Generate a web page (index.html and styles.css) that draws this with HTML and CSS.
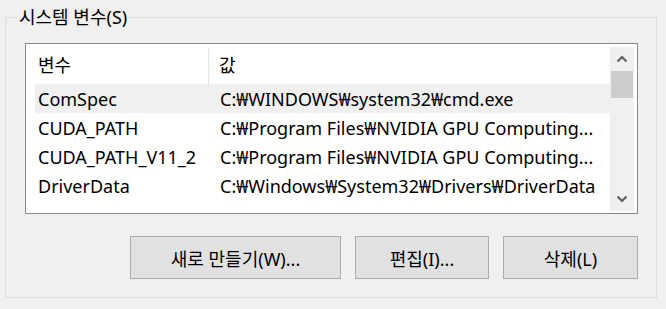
FILE: index.html
```html
<!DOCTYPE html>
<html lang="ko">
<head>
<meta charset="utf-8">
<link rel="stylesheet" href="styles.css">
</head>
<body>
<div class="page">
  <fieldset class="group">
    <legend class="title">시스템 변수(S)</legend>
    <div class="list">
      <div class="view">
        <div class="hdr">
          <div class="hc h1">변수</div>
          <div class="hc h2">값</div>
        </div>
        <div class="row sel"><div class="c1">ComSpec</div><div class="c2">C:₩WINDOWS₩system32₩cmd.exe</div></div>
        <div class="row"><div class="c1">CUDA_PATH</div><div class="c2">C:₩Program Files₩NVIDIA GPU Computing...</div></div>
        <div class="row"><div class="c1">CUDA_PATH_V11_2</div><div class="c2">C:₩Program Files₩NVIDIA GPU Computing...</div></div>
        <div class="row"><div class="c1">DriverData</div><div class="c2">C:₩Windows₩System32₩Drivers₩DriverData</div></div>
      </div>
      <div class="sbar">
        <div class="arrow">
          <svg width="12" height="8" viewBox="0 0 12 8"><path d="M1.5 6.5 L6 2 L10.5 6.5" fill="none" stroke="#606060" stroke-width="2.2"/></svg>
        </div>
        <div class="thumb"></div>
        <div class="track"></div>
        <div class="arrow">
          <svg width="12" height="8" viewBox="0 0 12 8"><path d="M1.5 1.5 L6 6 L10.5 1.5" fill="none" stroke="#606060" stroke-width="2.2"/></svg>
        </div>
      </div>
    </div>
    <div class="buttons">
      <button class="btn b-new">새로 만들기(W)...</button>
      <button class="btn b-edit">편집(I)...</button>
      <button class="btn b-del">삭제(L)</button>
    </div>
  </fieldset>
</div>
</body>
</html>
```

FILE: styles.css
```css
* { box-sizing: border-box; }
html, body {
  margin: 0;
  padding: 0;
  background: #f0f0f0;
  width: 666px;
  height: 309px;
  overflow: hidden;
  font-family: "Noto Sans", "Noto Sans CJK KR", sans-serif;
  font-size: 18px;
  color: #000;
}
.page {
  padding: 8px 9px 0 5px;
}
.group {
  margin: 0;
  border: 1px solid #dcdcdc;
  padding: 0 18px 17px 19px;
  height: 290px;
  min-width: 0;
}
.title {
  margin-left: -8px;
  padding: 0 2px;
  line-height: 18px;
  font-size: 18px;
}
.list {
  margin-top: 17px;
  height: 171px;
  border: 1px solid #828790;
  background: #fff;
  padding: 3px 3px 2px 9px;
  display: flex;
}
.view {
  flex: 1;
  overflow: hidden;
  min-width: 0;
}
.hdr {
  display: flex;
  height: 37px;
  align-items: stretch;
}
.hc {
  display: flex;
  align-items: center;
  white-space: nowrap;
  padding-bottom: 4px;
}
.h1 {
  width: 174px;
  padding-left: 3px;
  border-right: 1px solid #e5e5e5;
}
.h2 {
  padding-left: 10px;
}
.row {
  display: flex;
  height: 29px;
  align-items: center;
  white-space: nowrap;
}
.row.sel {
  background: #f0f0f0;
}
.c1 {
  width: 185px;
  padding-left: 3px;
  flex: none;
}
.c2 {
  flex: none;
}
.sbar {
  width: 24px;
  flex: none;
  background: #f0f0f0;
  display: flex;
  flex-direction: column;
}
.arrow {
  height: 24px;
  display: flex;
  align-items: center;
  justify-content: center;
  flex: none;
}
.thumb {
  height: 27px;
  margin: 0 1px;
  background: #cdcdcd;
  flex: none;
}
.track { flex: 1; }
.buttons {
  display: flex;
  justify-content: flex-end;
  gap: 14px;
  margin-top: 22px;
}
.btn {
  height: 43px;
  background: #e1e1e1;
  border: 1px solid #adadad;
  font-family: "Noto Sans", "Noto Sans CJK KR", sans-serif;
  font-size: 18px;
  color: #000;
  padding: 0;
}
.b-new { width: 211px; }
.b-edit { width: 134px; }
.b-del { width: 135px; }
```
